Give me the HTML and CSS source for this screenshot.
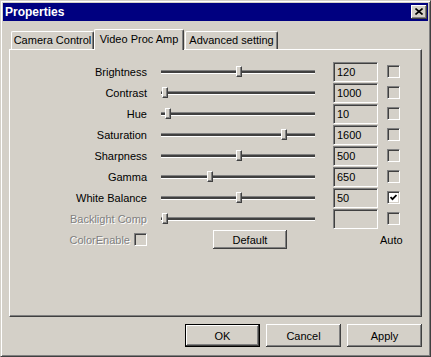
FILE: index.html
```html
<!DOCTYPE html>
<html lang="en">
<head>
    <meta charset="UTF-8">
    <title>Properties</title>
    <link rel="stylesheet" href="styles.css">
</head>
<body>
    <div class="window">
        <div class="titlebar">
            <span class="title">Properties</span>
            <span class="close">
                <svg width="8" height="7" viewBox="0 0 8 7"><path d="M0.5 0.5 L7.5 6.5 M7.5 0.5 L0.5 6.5" stroke="#000" stroke-width="1.6" fill="none"/></svg>
            </span>
        </div>

        <div class="sheet">
            <div class="tabs">
                <div class="tab tab-camera">Camera Control</div>
                <div class="tab tab-active">Video Proc Amp</div>
                <div class="tab tab-advanced">Advanced setting</div>
            </div>

            <div class="panel">
                <div class="row">
                    <span class="label">Brightness</span>
                    <div class="slider"><div class="track"></div><div class="thumb" style="left: 75px"></div></div>
                    <div class="value">120</div>
                    <span class="check"></span>
                </div>
                <div class="row">
                    <span class="label">Contrast</span>
                    <div class="slider"><div class="track"></div><div class="thumb" style="left: 1px"></div></div>
                    <div class="value">1000</div>
                    <span class="check"></span>
                </div>
                <div class="row">
                    <span class="label">Hue</span>
                    <div class="slider"><div class="track"></div><div class="thumb" style="left: 4px"></div></div>
                    <div class="value">10</div>
                    <span class="check"></span>
                </div>
                <div class="row">
                    <span class="label">Saturation</span>
                    <div class="slider"><div class="track"></div><div class="thumb" style="left: 120px"></div></div>
                    <div class="value">1600</div>
                    <span class="check"></span>
                </div>
                <div class="row">
                    <span class="label">Sharpness</span>
                    <div class="slider"><div class="track"></div><div class="thumb" style="left: 75px"></div></div>
                    <div class="value">500</div>
                    <span class="check"></span>
                </div>
                <div class="row">
                    <span class="label">Gamma</span>
                    <div class="slider"><div class="track"></div><div class="thumb" style="left: 46px"></div></div>
                    <div class="value">650</div>
                    <span class="check"></span>
                </div>
                <div class="row">
                    <span class="label">White Balance</span>
                    <div class="slider"><div class="track"></div><div class="thumb" style="left: 75px"></div></div>
                    <div class="value">50</div>
                    <span class="check checked">
                        <svg width="7" height="7" viewBox="0 0 7 7"><path d="M0.5 3 L2.5 5.2 L6.5 1" stroke="#000" stroke-width="1.8" fill="none"/></svg>
                    </span>
                </div>
                <div class="row">
                    <span class="label disabled">Backlight Comp</span>
                    <div class="slider"><div class="track"></div><div class="thumb" style="left: 1px"></div></div>
                    <div class="value"></div>
                    <span class="check"></span>
                </div>
                <div class="row">
                    <span class="label label-check"><span class="disabled">ColorEnable</span><span class="check"></span></span>
                    <div class="slider"><button class="btn btn-default">Default</button></div>
                    <span class="auto">Auto</span>
                </div>
            </div>
        </div>

        <div class="footer">
            <button class="btn btn-main btn-ok">OK</button>
            <button class="btn btn-main">Cancel</button>
            <button class="btn btn-main">Apply</button>
        </div>
    </div>
</body>
</html>
```

FILE: styles.css
```css
body {
    margin: 0;
    background: #d4d0c8;
    font-family: "Liberation Sans", Arial, sans-serif;
    font-size: 11px;
    color: #000;
}
.window {
    width: 431px;
    height: 357px;
    box-sizing: border-box;
    border: 1px solid;
    border-color: #d4d0c8 #404040 #404040 #d4d0c8;
    box-shadow: inset 1px 1px #fff, inset -1px -1px #808080;
    padding: 2px;
    display: flex;
    flex-direction: column;
}
.titlebar {
    height: 18px;
    background: #000080;
    display: flex;
    align-items: center;
    justify-content: space-between;
    padding: 0 1px 0 2px;
}
.title {
    color: #fff;
    font-weight: bold;
    font-size: 12px;
}
.close {
    width: 16px;
    height: 14px;
    box-sizing: border-box;
    background: #d4d0c8;
    box-shadow: inset -1px -1px #404040, inset 1px 1px #fff, inset -2px -2px #808080;
    display: flex;
    align-items: center;
    justify-content: center;
    padding-bottom: 1px;
}
.sheet {
    margin: 8px 6px 0;
}
.tabs {
    display: flex;
    align-items: flex-end;
    height: 20px;
    padding-left: 2px;
    position: relative;
    z-index: 1;
}
.tab {
    height: 18px;
    box-sizing: border-box;
    border-top: 1px solid #fff;
    border-left: 1px solid #fff;
    border-right: 1px solid #404040;
    border-radius: 2px 2px 0 0;
    box-shadow: inset -1px 0 #808080;
    display: flex;
    align-items: center;
    justify-content: center;
    padding-bottom: 1px;
    background: #d4d0c8;
}
.tab-camera {
    width: 83px;
}
.tab-active {
    width: 90px;
    height: 21px;
    margin-bottom: -1px;
    padding-bottom: 3px;
}
.tab-advanced {
    width: 93px;
    margin-left: 1px;
}
.panel {
    height: 268px;
    box-sizing: border-box;
    border: 1px solid;
    border-color: #fff #404040 #404040 #fff;
    box-shadow: inset -1px -1px #808080;
    padding-top: 11px;
}
.row {
    display: flex;
    align-items: center;
    height: 21px;
}
.label {
    width: 137px;
    text-align: right;
}
.label-check {
    display: flex;
    justify-content: flex-end;
    align-items: center;
    gap: 4px;
}
.disabled {
    color: #808080;
    text-shadow: 1px 1px #fff;
}
.slider {
    width: 154px;
    height: 21px;
    margin-left: 14px;
    position: relative;
    display: flex;
    align-items: center;
}
.track {
    width: 100%;
    height: 2px;
    border-top: 1px solid #808080;
    border-bottom: 1px solid #fff;
    background: #404040;
}
.thumb {
    position: absolute;
    top: 5px;
    width: 6px;
    height: 11px;
    box-sizing: border-box;
    background: #d4d0c8;
    border-top: 1px solid #fff;
    border-left: 1px solid #fff;
    border-right: 1px solid #404040;
    border-bottom: 1px solid #404040;
    box-shadow: inset -1px -1px #808080;
}
.value {
    width: 45px;
    height: 20px;
    margin-left: 18px;
    box-sizing: border-box;
    border: 1px solid;
    border-color: #808080 #fff #fff #808080;
    box-shadow: inset 1px 1px #404040, inset -1px -1px #d4d0c8;
    padding: 3px 0 0 3px;
    line-height: 13px;
}
.check {
    width: 13px;
    height: 13px;
    margin-left: 9px;
    box-sizing: border-box;
    border: 1px solid;
    border-color: #808080 #fff #fff #808080;
    box-shadow: inset 1px 1px #404040, inset -1px -1px #d4d0c8;
    display: flex;
    align-items: center;
    justify-content: center;
}
.label-check .check {
    margin-left: 0;
}
.checked {
    background: #fff;
}
.btn {
    font-family: "Liberation Sans", Arial, sans-serif;
    font-size: 11px;
    color: #000;
    background: #d4d0c8;
    border: none;
    padding: 0;
    box-shadow: inset -1px -1px #404040, inset 1px 1px #fff, inset -2px -2px #808080;
}
.btn-default {
    width: 74px;
    height: 19px;
    margin-left: 52px;
}
.auto {
    margin-left: 65px;
}
.footer {
    display: flex;
    justify-content: flex-end;
    gap: 6px;
    margin: 7px 6px 0 0;
}
.btn-main {
    width: 75px;
    height: 23px;
}
.btn-ok {
    border: 1px solid #000;
    box-shadow: inset -1px -1px #404040, inset 1px 1px #fff, inset -2px -2px #808080;
}
```
